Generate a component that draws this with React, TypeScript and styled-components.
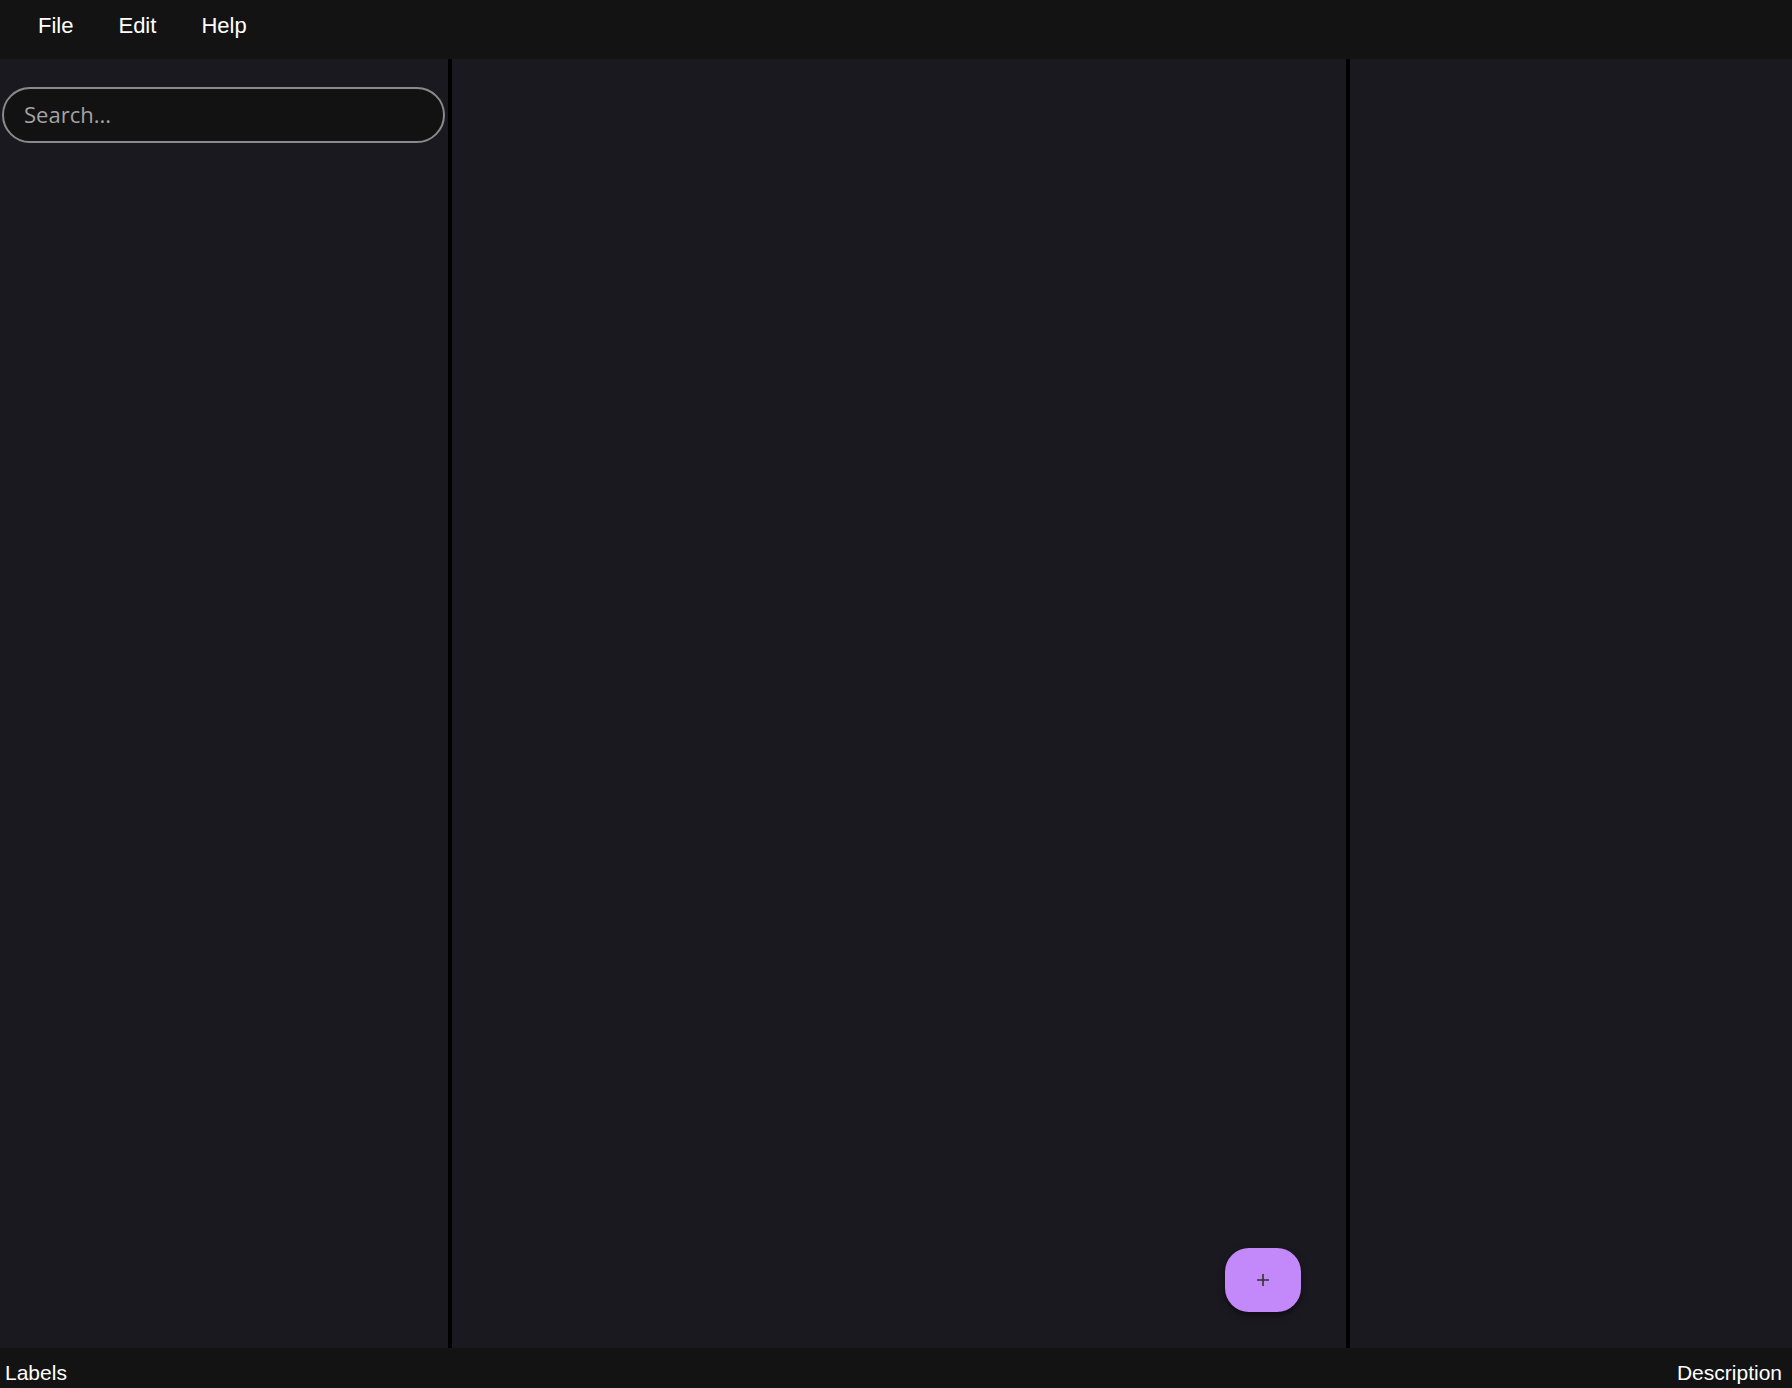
import React from "react";
import styled, { createGlobalStyle } from "styled-components";

const GlobalStyle = createGlobalStyle`
  html, body {
    margin: 0;
    padding: 0;
    height: 100%;
    background: #1b1920;
  }
  #root {
    height: 100%;
  }
  * {
    box-sizing: border-box;
  }
`;

const Shell = styled.div`
  display: flex;
  flex-direction: column;
  width: 100vw;
  height: 100vh;
  font-family: "Liberation Sans", Arial, sans-serif;
  color: #ffffff;
  overflow: hidden;
`;

const MenuBar = styled.nav`
  display: flex;
  align-items: center;
  height: 59px;
  flex: none;
  padding-left: 26px;
  gap: 21px;
  background: #131313;
`;

const MenuItem = styled.button`
  background: none;
  border: none;
  color: #ffffff;
  font-family: inherit;
  font-size: 22px;
  line-height: 26px;
  padding: 0 12px;
  margin-top: -7px;
  cursor: pointer;
`;

const Main = styled.main`
  display: flex;
  flex: 1;
  min-height: 0;
`;

const Panel = styled.section<{ $width?: string }>`
  position: relative;
  flex: ${(p) => (p.$width ? `0 0 ${p.$width}` : "1")};
  background: #1b1920;
  min-width: 0;
`;

const LeftPanel = styled(Panel)`
  padding: 28px 3px 0 2px;
`;

const Divider = styled.div`
  flex: 0 0 4px;
  background: #000000;
`;

const SearchInput = styled.input`
  display: block;
  width: 100%;
  height: 56px;
  border-radius: 28px;
  border: 2px solid #8a8a8a;
  background: #121212;
  color: #ffffff;
  font-family: "Open Sans", "Noto Sans", sans-serif;
  font-size: 22px;
  padding: 0 20px 2px;
  outline: none;
  &::placeholder {
    color: #a3a3a3;
  }
`;

const Fab = styled.button`
  position: absolute;
  right: 45px;
  bottom: 36px;
  width: 76px;
  height: 64px;
  border-radius: 24px;
  border: none;
  background: #c389fa;
  color: #2a2a2a;
  display: flex;
  align-items: center;
  justify-content: center;
  box-shadow: 0 3px 6px rgba(0, 0, 0, 0.5);
  cursor: pointer;
  padding: 0;
`;

const StatusBar = styled.footer`
  display: flex;
  align-items: flex-end;
  justify-content: space-between;
  height: 40px;
  flex: none;
  background: #131313;
  padding: 0 10px 3px 5px;
  font-size: 21px;
  line-height: 24px;
`;

export default function App() {
  return (
    <>
      <GlobalStyle />
      <Shell>
        <MenuBar>
          <MenuItem>File</MenuItem>
          <MenuItem>Edit</MenuItem>
          <MenuItem>Help</MenuItem>
        </MenuBar>
        <Main>
          <LeftPanel $width="448px">
            <SearchInput placeholder="Search..." />
          </LeftPanel>
          <Divider />
          <Panel>
            <Fab aria-label="Add">
              <svg width="14" height="14" viewBox="0 0 14 14">
                <path d="M7 1v12M1 7h12" stroke="#333" strokeWidth="1.6" />
              </svg>
            </Fab>
          </Panel>
          <Divider />
          <Panel $width="442px" />
        </Main>
        <StatusBar>
          <span>Labels</span>
          <span>Description</span>
        </StatusBar>
      </Shell>
    </>
  );
}
